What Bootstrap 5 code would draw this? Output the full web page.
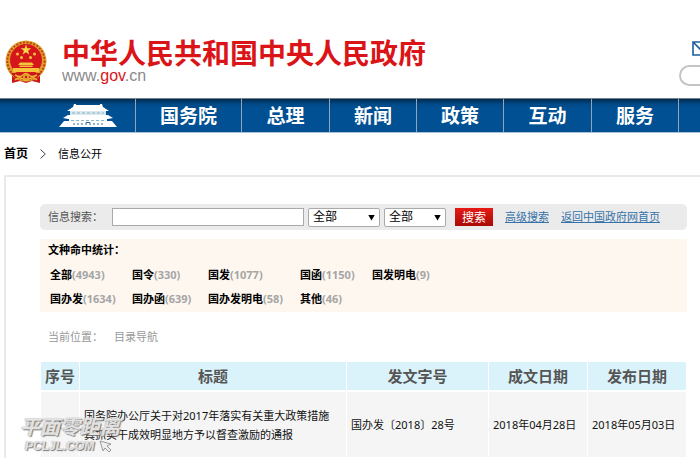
<!DOCTYPE html>
<html lang="zh-CN">
<head>
<meta charset="utf-8">
<meta name="viewport" content="width=device-width, initial-scale=1">
<title>信息公开</title>
<link href="https://cdn.jsdelivr.net/npm/bootstrap@5.3.0/dist/css/bootstrap.min.css" rel="stylesheet">
<style>
body{font-family:"Noto Sans","Noto Sans CJK SC",sans-serif;font-size:11px;line-height:16px;color:#000;background:#fff;overflow-x:hidden}
a{color:inherit}
.site-head{height:98px}
.brand-box{gap:15px;padding:38px 0 0 5px}
.site-name{font:700 28px/28px "Noto Sans CJK SC",sans-serif;color:#da1417;margin:0}
.site-url{font:16px/20px "Liberation Sans",sans-serif;color:#8a8a8a}
.site-url b{font-weight:400;color:#da1417}
.head-tools{width:21px;padding-top:41px;gap:9px}
.pill-input{height:21px;border:2px solid #c4c4c4;border-right:0;border-radius:11px 0 0 11px;outline:0;background:#fff}
.main-nav{height:35px;padding:0;background:linear-gradient(#00294f,#004a86 5px,#005093 10px);border-top:1px solid #76808a;border-bottom:1px solid #a9c0d6}
.main-nav a{width:87px;height:33px;border-right:1px solid #8ea6bd;color:#fff;font:700 19px/32px "Noto Sans CJK SC",sans-serif;text-align:center}
.main-nav .nav-home{width:136px;padding-left:58px;text-align:left}
.main-nav .nav-wide{width:106px}
.main-nav .nav-mid{width:88px}
.crumbs{height:42px;padding:0 4px;gap:12px}
.crumbs .here{font-size:11px}
.crumbs .first{font-size:12px}
.panel{margin-left:4px;border:2px solid #eaeaea;border-right:0;border-bottom:0;padding:27px 13px 0 34px}
.search-bar{min-height:26px;background:#ebebeb;border-radius:5px;padding:0 8px}
.search-bar label{color:#555;width:64px}
.search-bar input{width:192px;height:18px;border:1px solid #aaa;background:#fff;padding:0 4px}
.pick{margin-left:4px}
.pick select{appearance:none;width:72px;height:19px;border:1px solid #aaa;border-radius:2px;background:#fff;color:#000;padding:0 4px;font-size:12px;line-height:16px}
.pick.narrow select{width:62px}
.pick::after{content:"";position:absolute;right:5px;top:7px;width:7px;height:6px;background:#000;clip-path:polygon(0 0,100% 0,50% 100%);pointer-events:none}
.go-btn{width:38px;height:18px;margin:0 12px 0 9px;border:0;padding:0;color:#fff;font-size:12px;line-height:17px;background:linear-gradient(#e71a14,#a80b05)}
.search-bar a{color:#3672a8;margin-right:12px}
.stats{background:#fdf7f0;margin-top:9px;padding:3px 8px 2px}
.stats h2{font-size:11px;line-height:16px;font-weight:700;margin:0 0 4px}
.stats ul{display:grid;grid-template-columns:82px 76px 92px 72px 1fr;grid-auto-rows:24px;margin:0;padding-left:2px;list-style:none;font-weight:700;line-height:25px;white-space:nowrap}
.stats span{color:#a5a5a5}
.place{color:#999;padding:17px 8px 17px;gap:11px}
.docs{border-collapse:separate;border-spacing:1px 0;table-layout:fixed;width:100%;margin:0}
.docs th{background:#daf3fb;color:#555;font-size:15px;line-height:28px;font-weight:700;text-align:center;padding:0;border-bottom:2px solid #fff;white-space:nowrap}
.docs td{background:#f5f5f5;height:65px;padding:0 4px;line-height:19px;color:#111}
.c-no{width:38px}.c-ref{width:141px}.c-date{width:98px}
.stamp{position:absolute;left:20px;bottom:5px;pointer-events:none;color:#e2e2e2;font:italic 700 20px/28px "Noto Sans CJK SC",sans-serif;text-shadow:1px 1px 1px #777,-1px 0 1px #ccc}
.stamp div{font:italic 700 12px/12px "Liberation Sans",sans-serif;padding-left:5px;gap:5px}
</style>
</head>
<body class="d-flex flex-column min-vh-100 position-relative">
<header class="site-head d-flex justify-content-between">
  <div class="brand-box d-flex align-items-start">
    <svg width="42" height="48" viewBox="0 -1 42 48" aria-hidden="true">
      <path d="M7 34 L7 44 L15 42 L21 44 L27 42 L35 44 L35 34Z" fill="#c8191a"/>
      <circle cx="21" cy="22" r="20.500" fill="#dfa02c"/>
      <circle cx="21" cy="22" r="18.6" fill="none" stroke="#bd3b18" stroke-width="1.8" stroke-dasharray="2 1.5"/>
      <circle cx="21" cy="21" r="16" fill="#d5161b"/>
      <path d="M21 5.500 22.300 9.300 26.200 9.300 23.100 11.700 24.200 15.500 21 13.200 17.800 15.500 18.900 11.700 15.800 9.300 19.700 9.300Z" fill="#fbd848"/>
      <g fill="#f5c43a"><circle cx="12.500" cy="15" r="1.500"/><circle cx="16.500" cy="18.500" r="1.500"/><circle cx="25.500" cy="18.500" r="1.500"/><circle cx="29.500" cy="15" r="1.500"/>
      <path d="M15 23.500H27L29 26H13ZM14.500 26.500H27.500V28H14.500ZM8 29H34V33H8Z"/></g>
      <path d="M6 34H36L32 39H10Z" fill="#c8191a"/>
      <path d="M10 36Q15 39 18 36Q21 33 24 36Q27 39 32 36M10 41Q15 37 18 40Q21 43 24 40Q27 37 32 41" fill="none" stroke="#eeb335" stroke-width="1.500"/>
      <circle cx="21" cy="38" r="3" fill="#e5a32b"/><circle cx="21" cy="38" r="1.200" fill="#c8191a"/>
    </svg>
    <div>
      <h1 class="site-name">中华人民共和国中央人民政府</h1>
      <div class="site-url">www.<b>gov</b>.cn</div>
    </div>
  </div>
  <div class="head-tools d-flex flex-column overflow-hidden">
    <svg class="ms-auto flex-shrink-0" width="8" height="15" viewBox="0 0 8 15" aria-hidden="true"><path d="M20 1H1V14H20M1 1 10 10" fill="none" stroke="#1f5f9f" stroke-width="1.600"/></svg>
    <input class="pill-input w-100" type="text" aria-label="站内搜索">
  </div>
</header>
<nav class="main-nav navbar flex-nowrap justify-content-start overflow-hidden">
  <a class="nav-home flex-shrink-0 d-flex align-items-center text-decoration-none" href="#" aria-label="首页">
    <svg width="60" height="26" viewBox="0 0 60 26" aria-hidden="true">
      <g fill="#fff"><path d="M16 1H18V2H42V1H44L45 4 51 8 9 8 15 4Z"/><path d="M12 8H48V12H12Z" fill="#d9e8ee"/><path d="M10 12H50L55 15 50 16H10L5 15Z"/><path d="M11 16H49V20H11Z"/><path d="M6 18H13V20H47V18H54L59 24H1Z"/></g>
      <path d="M14 10H46M13 17.500H47" stroke="#8db4c8" stroke-width="1" stroke-dasharray="3 2"/>
      <path d="M16 20V22M20 20V22M24 20V22M36 20V22M40 20V22M44 20V22M28 22V19.500H32V22" stroke="#2c6c99" stroke-width="1" fill="none"/>
    </svg>
  </a>
  <a class="nav-wide flex-shrink-0 text-decoration-none" href="#">国务院</a>
  <a class="nav-mid flex-shrink-0 text-decoration-none" href="#">总理</a>
  <a class="flex-shrink-0 text-decoration-none" href="#">新闻</a>
  <a class="flex-shrink-0 text-decoration-none" href="#">政策</a>
  <a class="nav-mid flex-shrink-0 text-decoration-none" href="#">互动</a>
  <a class="flex-shrink-0 text-decoration-none" href="#">服务</a>
</nav>
<div class="crumbs d-flex align-items-center">
  <a class="first fw-bold text-decoration-none" href="#">首页</a>
  <svg width="6" height="10" viewBox="0 0 6 10" aria-hidden="true"><path d="M.5.500 5.300 5 .5 9.500" fill="none" stroke="#444"/></svg>
  <span class="here">信息公开</span>
</div>
<main class="panel flex-grow-1">
  <form class="search-bar d-flex align-items-center text-nowrap">
    <label for="q">信息搜索：</label>
    <input id="q" type="text">
    <div class="pick position-relative"><select aria-label="范围"><option>全部</option></select></div>
    <div class="pick narrow position-relative"><select aria-label="类别"><option>全部</option></select></div>
    <button class="go-btn" type="button">搜索</button>
    <a href="#">高级搜索</a>
    <a href="#">返回中国政府网首页</a>
  </form>
  <section class="stats">
    <h2>文种命中统计：</h2>
    <ul>
      <li><a class="text-decoration-none" href="#">全部<span>(4943)</span></a></li>
      <li><a class="text-decoration-none" href="#">国令<span>(330)</span></a></li>
      <li><a class="text-decoration-none" href="#">国发<span>(1077)</span></a></li>
      <li><a class="text-decoration-none" href="#">国函<span>(1150)</span></a></li>
      <li><a class="text-decoration-none" href="#">国发明电<span>(9)</span></a></li>
      <li><a class="text-decoration-none" href="#">国办发<span>(1634)</span></a></li>
      <li><a class="text-decoration-none" href="#">国办函<span>(639)</span></a></li>
      <li><a class="text-decoration-none" href="#">国办发明电<span>(58)</span></a></li>
      <li><a class="text-decoration-none" href="#">其他<span>(46)</span></a></li>
    </ul>
  </section>
  <div class="place d-flex"><span>当前位置：</span><span>目录导航</span></div>
  <table class="docs">
    <thead><tr><th class="c-no">序号</th><th>标题</th><th class="c-ref">发文字号</th><th class="c-date">成文日期</th><th class="c-date">发布日期</th></tr></thead>
    <tbody><tr>
      <td class="text-center">1</td>
      <td>国务院办公厅关于对2017年落实有关重大政策措施<br>真抓实干成效明显地方予以督查激励的通报</td>
      <td>国办发〔2018〕28号</td><td>2018年04月28日</td><td>2018年05月03日</td>
    </tr></tbody>
  </table>
</main>
<div class="stamp">平面零距离
  <div class="d-flex">PCLJL.COM<svg width="14" height="13" viewBox="0 0 14 13" aria-hidden="true"><path d="M1 1 12 4 8 6 12 10 10 12 6 8 4 11Z" fill="#eee" stroke="#999"/></svg></div>
</div>
<script src="https://cdn.jsdelivr.net/npm/bootstrap@5.3.0/dist/js/bootstrap.bundle.min.js"></script>
</body>
</html>
